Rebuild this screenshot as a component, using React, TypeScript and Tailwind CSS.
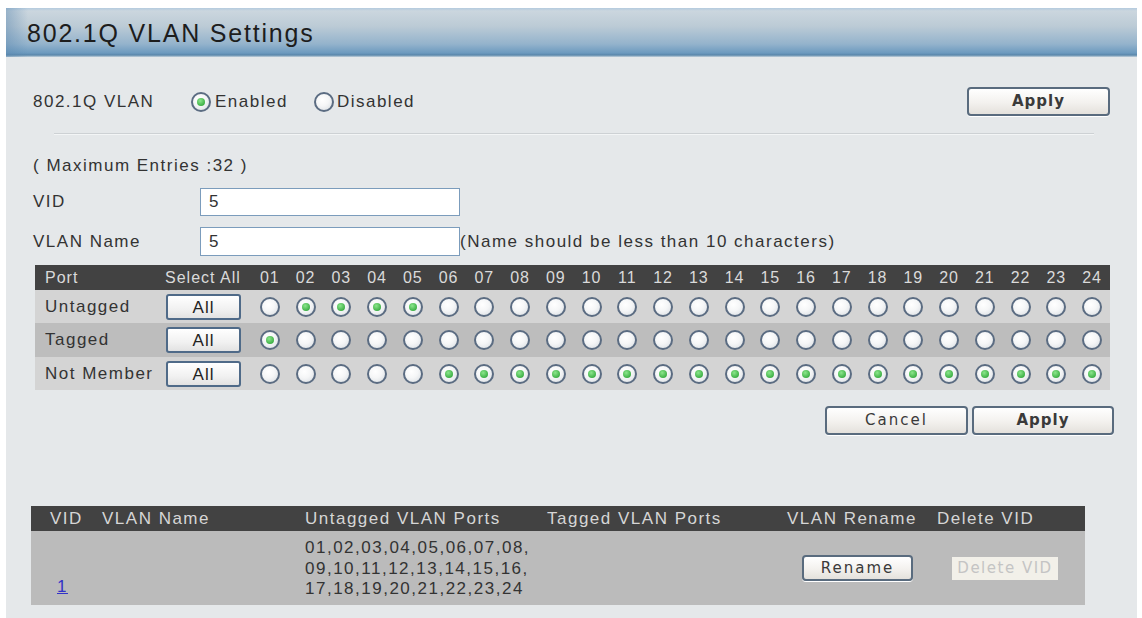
import type { ReactNode } from "react";

const SANS = "font-['Liberation_Sans',Arial,sans-serif]";
const BTN_FONT = "font-['DejaVu_Sans',Verdana,sans-serif]";

const PORTS = Array.from({ length: 24 }, (_, i) => i + 1);
const pad = (n: number) => String(n).padStart(2, "0");

// membership of VLAN 5
const UNTAGGED = [2, 3, 4, 5];
const TAGGED = [1];

function Radio({ on }: { on?: boolean }) {
  return (
    <span className="flex h-[20px] w-[20px] items-center justify-center rounded-full border-2 border-[#5b6c82] bg-[radial-gradient(circle_at_40%_35%,#ffffff_0%,#f5f6f7_45%,#d6dbe0_100%)]">
      {on && (
        <span className="h-[8px] w-[8px] rounded-full bg-[radial-gradient(circle_at_40%_35%,#8be68b,#1f9a2a)]" />
      )}
    </span>
  );
}

function Button({
  children,
  className = "",
}: {
  children: ReactNode;
  className?: string;
}) {
  return (
    <button
      type="button"
      className={`flex items-center justify-center rounded-[4px] border-2 border-[#596b7e] bg-[linear-gradient(to_bottom,#ffffff,#f3f1ee_55%,#e4e1dc)] text-[#3a3a3a] shadow-[0_1px_0_#ffffff] ${BTN_FONT} ${className}`}
    >
      {children}
    </button>
  );
}

function AllButton() {
  return (
    <button
      type="button"
      className={`ml-[1px] flex h-[26px] w-[75px] items-center justify-center rounded-[3px] border-2 border-[#4f6a88] bg-[linear-gradient(to_bottom,#ffffff,#f1f1f1_60%,#e2e2e2)] pt-[2px] text-[17px] tracking-[1px] text-[#222] ${SANS}`}
    >
      All
    </button>
  );
}

const ROWS = [
  { label: "Untagged", bg: "bg-[#d4d4d4]", h: "h-[33px]", isOn: (p: number) => UNTAGGED.includes(p) },
  { label: "Tagged", bg: "bg-[#bdbdbd]", h: "h-[34px]", isOn: (p: number) => TAGGED.includes(p) },
  {
    label: "Not Member",
    bg: "bg-[#d4d4d4]",
    h: "h-[33px]",
    isOn: (p: number) => !UNTAGGED.includes(p) && !TAGGED.includes(p),
  },
];

function PortTable() {
  return (
    <div className="ml-[29px] mt-[9px] w-[1075px]">
      <div
        className={`grid h-[25px] grid-cols-[130px_87px_repeat(24,minmax(0,1fr))] items-center bg-[#424242] text-[16px] tracking-[1px] text-[#dadada] ${SANS}`}
      >
        <span className="pl-[10px]">Port</span>
        <span>Select All</span>
        {PORTS.map((p) => (
          <span key={p} className="text-center">
            {pad(p)}
          </span>
        ))}
      </div>
      {ROWS.map((row) => (
        <div
          key={row.label}
          className={`grid grid-cols-[130px_87px_repeat(24,minmax(0,1fr))] items-center ${row.h} ${row.bg}`}
        >
          <span className={`pl-[10px] text-[17px] tracking-[1.5px] text-[#333] ${SANS}`}>{row.label}</span>
          <AllButton />
          {PORTS.map((p) => (
            <span key={p} className="flex justify-center">
              <Radio on={row.isOn(p)} />
            </span>
          ))}
        </div>
      ))}
    </div>
  );
}

function VlanTable() {
  return (
    <div className={`ml-[25px] mt-[71px] w-[1054px] text-[17px] tracking-[1.5px] ${SANS}`}>
      <div className="grid h-[25px] grid-cols-[71px_203px_242px_240px_150px_148px] items-center bg-[#424242] text-[#d6d6d6]">
        <span className="pl-[19px]">VID</span>
        <span>VLAN Name</span>
        <span>Untagged VLAN Ports</span>
        <span>Tagged VLAN Ports</span>
        <span>VLAN Rename</span>
        <span>Delete VID</span>
      </div>
      <div className="grid h-[74px] grid-cols-[71px_203px_242px_240px_150px_148px] bg-[#bbbbbb] text-[#333]">
        <span className="self-end pb-[6px] pl-[26px]">
          <a href="#" className="text-[#3232c8] underline">
            1
          </a>
        </span>
        <span />
        <span className="self-center pt-[2px] leading-[20.5px]">
          01,02,03,04,05,06,07,08,
          <br />
          09,10,11,12,13,14,15,16,
          <br />
          17,18,19,20,21,22,23,24
        </span>
        <span />
        <span className="flex items-center pl-[15px]">
          <Button className="h-[26px] w-[111px] text-[15px] tracking-[2px]">Rename</Button>
        </span>
        <span className="flex items-center pl-[15px]">
          <span
            className={`flex h-[23px] w-[106px] items-center justify-center bg-[#f2f0e9] text-[15px] tracking-[1.5px] text-[#c4c4c4] ${BTN_FONT}`}
          >
            Delete VID
          </span>
        </span>
      </div>
    </div>
  );
}

export default function App() {
  return (
    <div className="h-[618px] w-[1142px] overflow-hidden bg-white pl-[6px] pt-[8px]">
      <div className="h-[610px] w-[1131px] bg-[#e5e8ea]">
        {/* title bar */}
        <div className="relative flex h-[49px] items-center bg-[linear-gradient(to_bottom,#b4cbdf_0px,#cbd6de_3px,#bccbd6_18px,#94b3cc_36px,#6c9abf_45px,#5a87aa_47px,#c3d1dc_49px)] pl-[21px]">
          <div className="absolute inset-y-0 left-0 w-[22px] bg-[linear-gradient(to_right,rgba(90,135,175,0.45),rgba(90,135,175,0))]" />
          <h1 className={`relative pt-[3px] text-[25px] tracking-[1.8px] text-[#1d1d1d] ${SANS}`}>
            802.1Q VLAN Settings
          </h1>
        </div>

        {/* global enable */}
        <div className={`mt-[30px] flex h-[29px] items-center pl-[27px] pr-[27px] text-[17px] tracking-[1.5px] text-[#333] ${SANS}`}>
          <span className="w-[158px]">802.1Q VLAN</span>
          <label className="flex items-center gap-[4px]">
            <Radio on />
            <span>Enabled</span>
          </label>
          <label className="ml-[26px] flex items-center gap-[3px]">
            <Radio />
            <span>Disabled</span>
          </label>
          <Button className="ml-auto h-[29px] w-[143px] text-[15px] font-bold tracking-[1px]">Apply</Button>
        </div>

        <div className="ml-[48px] mt-[17px] h-[2px] w-[1040px] border-t border-b border-t-[#cdd1d4] border-b-[#f3f5f6]" />

        {/* new vlan form */}
        <div className={`pl-[27px] text-[17px] tracking-[1.5px] text-[#333] ${SANS}`}>
          <div className="mt-[21px] flex h-[20px] items-center">( Maximum Entries :32 )</div>
          <div className="mt-[12px] flex items-center">
            <span className="w-[167px]">VID</span>
            <div className="flex h-[28px] w-[260px] items-center border-[1.5px] border-[#7b9cbc] bg-white pl-[8px]">5</div>
          </div>
          <div className="mt-[11px] flex items-center">
            <span className="w-[167px]">VLAN Name</span>
            <div className="flex h-[29px] w-[260px] items-center border-[1.5px] border-[#7b9cbc] bg-white pl-[8px]">5</div>
            <span>(Name should be less than 10 characters)</span>
          </div>
        </div>

        <PortTable />

        <div className="mt-[16px] flex justify-end gap-[4px] pr-[23px]">
          <Button className="h-[29px] w-[143px] text-[15px] tracking-[2px]">Cancel</Button>
          <Button className="h-[29px] w-[142px] text-[15px] font-bold tracking-[1px]">Apply</Button>
        </div>

        <VlanTable />
      </div>
    </div>
  );
}
